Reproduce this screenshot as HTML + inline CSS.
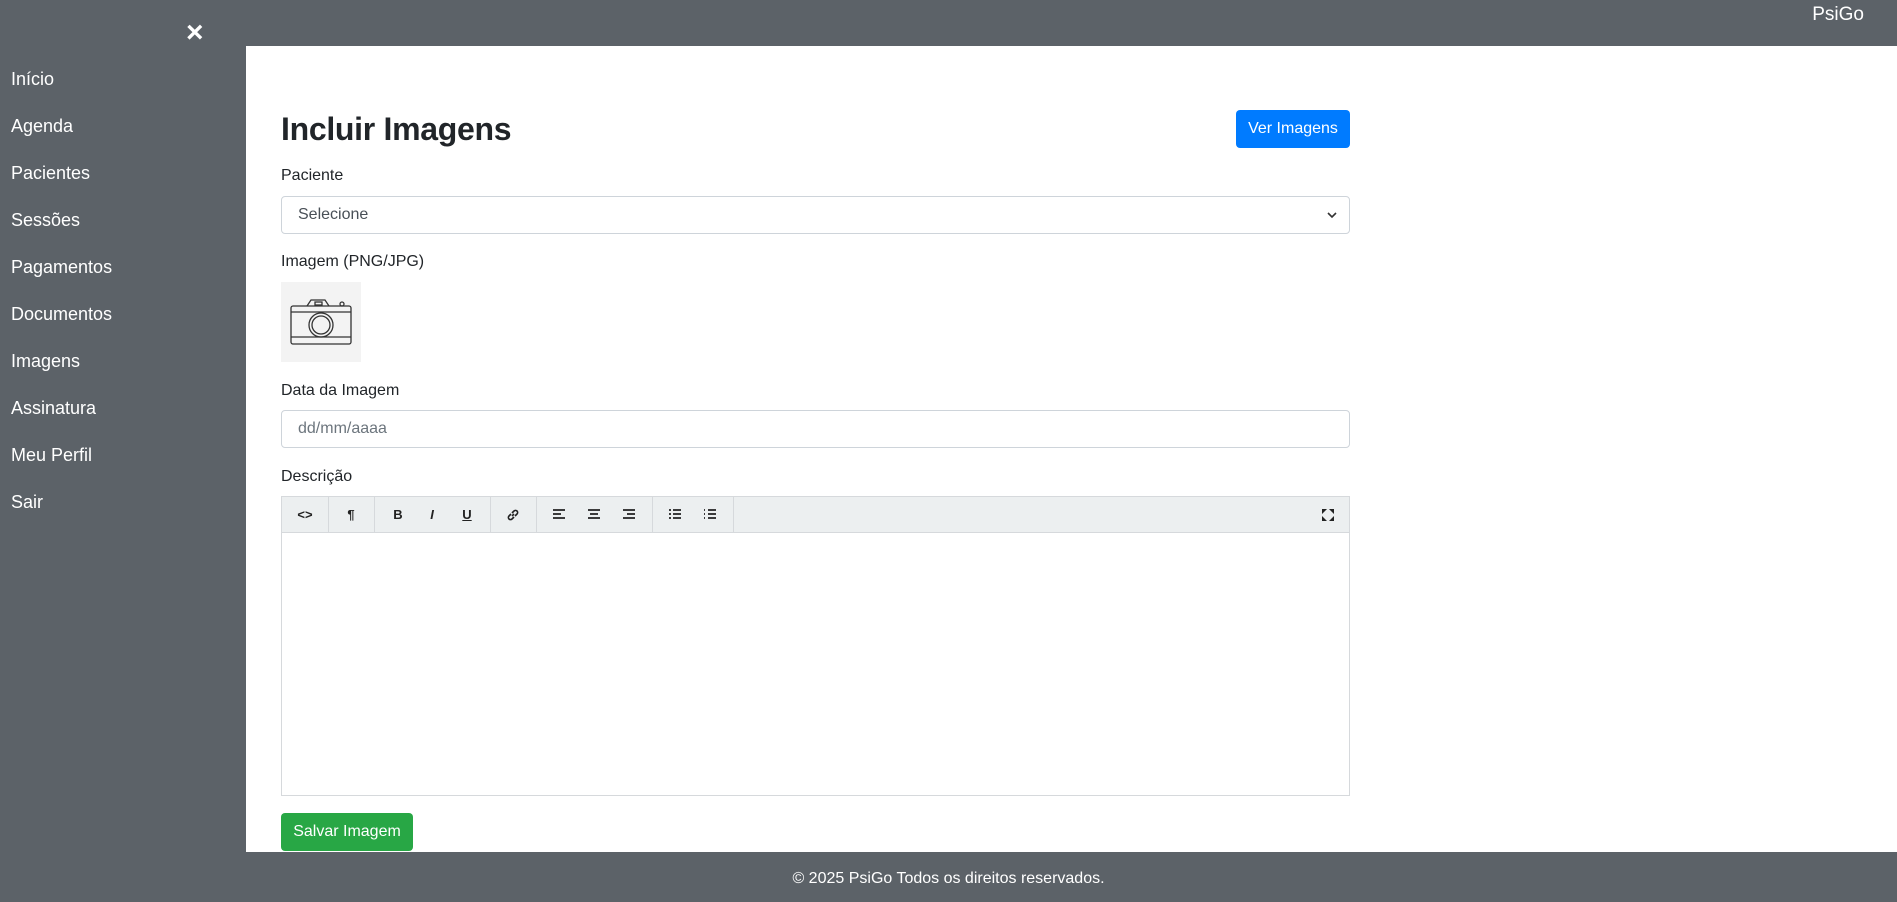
<!DOCTYPE html>
<html><head><meta charset="utf-8"><style>
*{box-sizing:border-box;margin:0;padding:0}
body{width:1897px;height:902px;background:#5c6268;font-family:"Liberation Sans",sans-serif;color:#212529;position:relative;overflow:hidden}
.a{position:absolute}
.nav{left:11px;color:#fff;font-size:18px;line-height:22px}
.main{left:246px;top:46px;width:1651px;height:806px;background:#fff}
.lbl{left:281px;font-size:16px;line-height:20px;color:#212529}
.inp{left:281px;width:1069px;height:38px;border:1px solid #ced4da;border-radius:4px;font-size:16px;padding:0 16px;line-height:36px}
.tb{left:281px;top:496px;width:1069px;height:37px;background:#eceff0;border:1px solid #d6d9dc}
.tbb{position:absolute;top:0;height:35px;line-height:35px;font-size:13px;font-weight:bold;text-align:center;width:30px;margin-left:-15px;color:#222}
.tbb svg{position:absolute;left:8px;top:11px}
.sep{position:absolute;top:0;width:1px;height:35px;background:#d6d9dc}
</style></head><body>
<div class="a" style="left:186px;top:18px;color:#fff;font-size:30px;font-weight:bold;line-height:30px">×</div>
<div class="a" style="right:33px;top:3px;color:#fff;font-size:19px;line-height:24px">PsiGo</div>
<div class="a nav" style="top:68px">Início</div>
<div class="a nav" style="top:115px">Agenda</div>
<div class="a nav" style="top:162px">Pacientes</div>
<div class="a nav" style="top:209px">Sessões</div>
<div class="a nav" style="top:256px">Pagamentos</div>
<div class="a nav" style="top:303px">Documentos</div>
<div class="a nav" style="top:350px">Imagens</div>
<div class="a nav" style="top:397px">Assinatura</div>
<div class="a nav" style="top:444px">Meu Perfil</div>
<div class="a nav" style="top:491px">Sair</div>
<div class="a main"></div>
<div class="a" style="left:281px;top:110px;font-size:32px;font-weight:bold;line-height:38px;letter-spacing:-0.3px">Incluir Imagens</div>
<div class="a" style="left:1236px;top:110px;width:114px;height:38px;background:#007bff;border-radius:4px;color:#fff;font-size:16px;line-height:38px;text-align:center">Ver Imagens</div>
<div class="a lbl" style="top:166px">Paciente</div>
<div class="a inp" style="top:196px;color:#495057">Selecione<svg style="position:absolute;right:12px;top:15px" width="10" height="7" viewBox="0 0 10 7"><path d="M1 1l4 4 4-4" stroke="#333" stroke-width="1.6" fill="none"/></svg></div>
<div class="a lbl" style="top:252px">Imagem (PNG/JPG)</div>
<div class="a" style="left:281px;top:282px;width:80px;height:80px;background:#f3f3f3">
<svg width="80" height="80" viewBox="0 0 80 80" fill="none" stroke="#333" stroke-width="1.3"><rect x="10" y="24" width="60" height="38" rx="2"/><line x1="10" y1="30" x2="70" y2="30"/><line x1="10" y1="55" x2="70" y2="55"/><path d="M26 24l4-6h14l4 6"/><rect x="34" y="20" width="7" height="3"/><circle cx="40" cy="43" r="12"/><circle cx="40" cy="43" r="9"/><circle cx="61" cy="22" r="2"/></svg></div>
<div class="a lbl" style="top:381px">Data da Imagem</div>
<div class="a inp" style="top:410px;color:#6c757d">dd/mm/aaaa</div>
<div class="a lbl" style="top:467px">Descrição</div>
<div class="a tb">
<div class="tbb" style="left:23px">&lt;&gt;</div><div class="sep" style="left:46px"></div>
<div class="tbb" style="left:69px">¶</div><div class="sep" style="left:92px"></div>
<div class="tbb" style="left:116px">B</div>
<div class="tbb" style="left:150px;font-style:italic">I</div>
<div class="tbb" style="left:185px;text-decoration:underline">U</div><div class="sep" style="left:208px"></div>
<div class="tbb" style="left:231px"><svg width="14" height="14" viewBox="0 0 14 14" fill="none" stroke="#222" stroke-width="1.6"><path d="M6 8l2-2M5 6L3 8a2 2 0 0 0 3 3l2-2M9 8l2-2a2 2 0 0 0-3-3L6 5"/></svg></div><div class="sep" style="left:254px"></div>
<div class="tbb" style="left:277px"><svg width="14" height="12" viewBox="0 0 14 12" stroke="#222" stroke-width="1.8"><path d="M1 2h12M1 6h8M1 10h12"/></svg></div>
<div class="tbb" style="left:312px"><svg width="14" height="12" viewBox="0 0 14 12" stroke="#222" stroke-width="1.8"><path d="M1 2h12M3 6h8M1 10h12"/></svg></div>
<div class="tbb" style="left:347px"><svg width="14" height="12" viewBox="0 0 14 12" stroke="#222" stroke-width="1.8"><path d="M1 2h12M5 6h8M1 10h12"/></svg></div><div class="sep" style="left:370px"></div>
<div class="tbb" style="left:393px"><svg width="14" height="12" viewBox="0 0 14 12" stroke="#222" stroke-width="1.8"><path d="M1 2h2M5 2h8M1 6h2M5 6h8M1 10h2M5 10h8"/></svg></div>
<div class="tbb" style="left:428px"><svg width="14" height="12" viewBox="0 0 14 12" stroke="#222" stroke-width="1.8"><path d="M1 2h1M5 2h8M1 6h1M5 6h8M1 10h1M5 10h8"/></svg></div><div class="sep" style="left:451px"></div>
<div class="tbb" style="left:1046px"><svg width="14" height="14" viewBox="0 0 14 14" fill="#222"><path d="M1 1h5L1 6zM13 1v5L8 1zM1 13V8l5 5zM13 13H8l5-5z"/></svg></div>
</div>
<div class="a" style="left:281px;top:533px;width:1069px;height:263px;border:1px solid #d6d9dc;border-top:none"></div>
<div class="a" style="left:281px;top:813px;width:132px;height:38px;background:#28a745;border-radius:4px;color:#fff;font-size:16px;line-height:38px;text-align:center">Salvar Imagem</div>
<div class="a" style="left:0;top:868px;width:1897px;text-align:center;color:#fff;font-size:16px;line-height:22px">© 2025 PsiGo Todos os direitos reservados.</div>
</body></html>
